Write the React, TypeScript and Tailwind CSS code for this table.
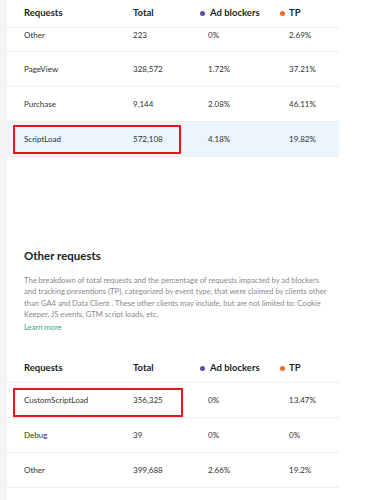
const cols = "grid grid-cols-[109px_67px_80px_1fr] items-center";

type Row = { name: string; total: string; ab: string; tp: string };

const topRows: Row[] = [
  { name: "PageView", total: "328,572", ab: "1.72%", tp: "37.21%" },
  { name: "Purchase", total: "9,144", ab: "2.08%", tp: "46.11%" },
];

const otherRows: Row[] = [
  { name: "Debug", total: "39", ab: "0%", tp: "0%" },
  { name: "Other", total: "399,688", ab: "2.66%", tp: "19.2%" },
];

const Header = () => (
  <div className={`${cols} h-[28px] border-b border-[#efefef] pl-[17px] text-[9.5px] font-bold text-[#201f1e]`}>
    <div>Requests</div>
    <div>Total</div>
    <div className="flex items-center gap-[5px]">
      <span className="h-[5px] w-[5px] rounded-full bg-[#5c4ea6]" />
      <span>Ad blockers</span>
    </div>
    <div className="flex items-center gap-[4px]">
      <span className="h-[5px] w-[5px] rounded-full bg-[#f26a2b]" />
      <span>TP</span>
    </div>
  </div>
);

const Cells = ({ r }: { r: Row }) => (
  <>
    <div>{r.name}</div>
    <div>{r.total}</div>
    <div className="pl-[8px]">{r.ab}</div>
    <div className="pl-[9px]">{r.tp}</div>
  </>
);

const DataRow = ({ r, highlight, boxed }: { r: Row; highlight?: boolean; boxed?: string }) => (
  <div
    className={`relative ${cols} h-[35px] border-b border-[#efefef] pl-[17px] text-[8px] text-[#323130] ${
      highlight ? "bg-[#eaf5fd]" : ""
    }`}
  >
    <Cells r={r} />
    {boxed && <div className={`absolute left-[6px] border-2 border-[#e8141b] ${boxed}`} />}
  </div>
);

export default function App() {
  return (
    <div className="flex h-[500px] w-[376px] overflow-hidden bg-white font-['Lato',sans-serif]">
      <div className="w-[7px] shrink-0 bg-[#f4f4f4]" />
      <div className="w-[332px] shrink-0">
        <Header />
        {/* row partly scrolled under the header */}
        <div className="h-[24px] overflow-hidden border-b border-[#efefef]">
          <div className={`${cols} -mt-[11px] h-[35px] pl-[17px] text-[8px] text-[#323130]`}>
            <Cells r={{ name: "Other", total: "223", ab: "0%", tp: "2.69%" }} />
          </div>
        </div>
        {topRows.map((r) => (
          <DataRow key={r.name} r={r} />
        ))}
        <DataRow
          r={{ name: "ScriptLoad", total: "572,108", ab: "4.18%", tp: "19.82%" }}
          highlight
          boxed="top-[3px] h-[29px] w-[168px]"
        />

        <div className="pl-[17px] pr-[8px] pt-[91px]">
          <h2 className="text-[11.5px] font-bold leading-[15px] text-[#201f1e]">Other requests</h2>
          <p className="mt-[12px] text-[7.6px] leading-[11.4px] text-[#8a8886]">
            The breakdown of total requests and the percentage of requests impacted by ad blockers and tracking
            preventions (TP), categorized by event type, that were claimed by clients other than GA4 and Data Client .
            These other clients may include, but are not limited to: Cookie Keeper, JS events, GTM script loads, etc.
          </p>
          <div className="text-[7.6px] leading-[13px] text-[#2fa68a]">Learn more</div>
        </div>

        <div className="mt-[21px]">
          <Header />
          <DataRow
            r={{ name: "CustomScriptLoad", total: "356,325", ab: "0%", tp: "13.47%" }}
            boxed="top-[5px] h-[29px] w-[170px]"
          />
          {otherRows.map((r) => (
            <DataRow key={r.name} r={r} />
          ))}
        </div>
      </div>
    </div>
  );
}
